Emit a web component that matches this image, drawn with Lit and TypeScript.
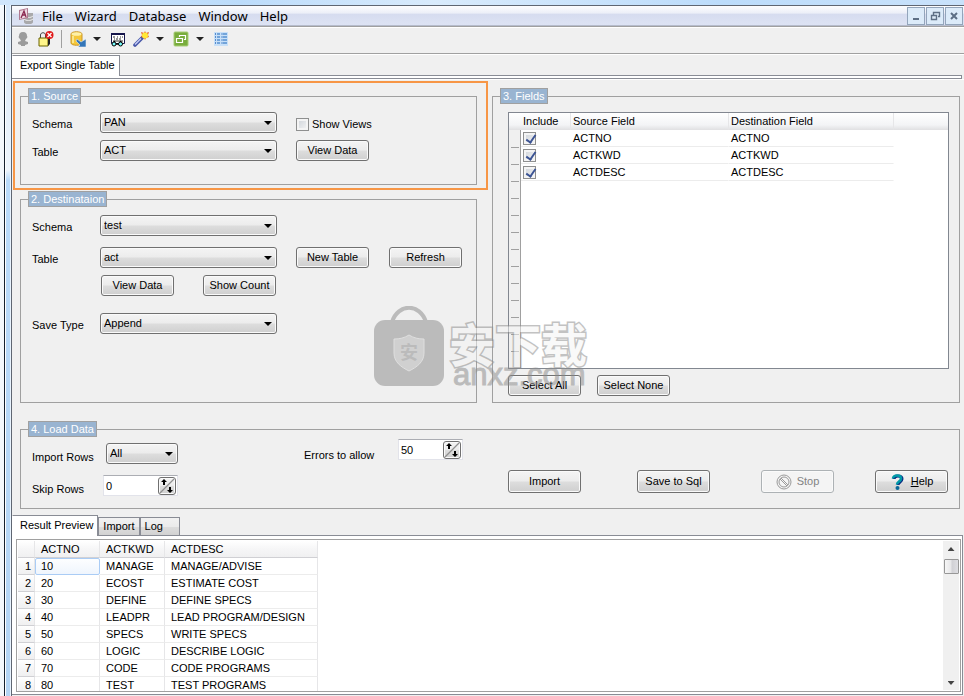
import { LitElement, html, svg, css } from "lit";
import { customElement, property } from "lit/decorators.js";

const face = css`
  :host, * { box-sizing: border-box; }
  button, select, input {
    font: inherit;
    color: inherit;
    margin: 0;
  }
  .face, button.push, select {
    border: 1px solid #707070;
    border-radius: 3px;
    background: linear-gradient(#f4f4f4, #ececec 48%, #dddddd 52%, #cfcfcf);
    box-shadow: inset 0 0 0 1px #fafafa;
  }
  button.push {
    width: 73px;
    height: 21px;
    padding: 0;
    flex: none;
    display: inline-flex;
    align-items: center;
    justify-content: center;
    gap: 5px;
    white-space: nowrap;
  }
  button.tall { height: 23px; }
  button.push:disabled {
    color: #838383;
    border-color: #adb2b5;
    background: #f4f4f4;
  }
`;

@customElement("drop-down")
class DropDown extends LitElement {
  @property() name = "";
  @property() label = "";
  @property({ type: Array }) options: string[] = [];

  static styles = [
    face,
    css`
      :host { display: block; position: relative; height: 21px; }
      select {
        appearance: none;
        display: block;
        width: 100%;
        height: 21px;
        padding: 0 20px 0 3px;
        line-height: 17px;
      }
      :host::after {
        content: "";
        position: absolute;
        right: 5px;
        top: 9px;
        border: 4px solid transparent;
        border-top-color: #000;
        border-bottom-width: 0;
        pointer-events: none;
      }
    `,
  ];

  render() {
    return html`<select name=${this.name} aria-label=${this.label}>
      ${this.options.map((o) => html`<option>${o}</option>`)}
    </select>`;
  }
}

@customElement("spin-box")
class SpinBox extends LitElement {
  @property() label = "";
  @property() value = "0";

  static styles = [
    face,
    css`
      :host {
        display: flex;
        align-items: center;
        height: 21px;
        background: #fff;
        border: 1px solid #e2e3ea;
        border-top-color: #abadb3;
      }
      input {
        appearance: textfield;
        flex: 1;
        min-width: 0;
        height: 18px;
        padding: 0 2px;
        border: 0;
        background: none;
        outline: none;
      }
      input::-webkit-inner-spin-button { display: none; }
      button { flex: none; width: 18px; height: 18px; padding: 0; margin-right: 1px; }
      svg { display: block; width: 16px; height: 16px; }
    `,
  ];

  render() {
    return html`<input type="number" aria-label=${this.label} .value=${this.value} />
      <button class="face" aria-label="Change ${this.label}">
        <svg viewBox="0 0 16 16">
          <path d="M1 15 15 1" stroke="#909090" stroke-width="1.2" />
          <path d="M5 1 8 4H6v3H4V4H2ZM11 15l3-3h-2V9h-2v3H8Z" fill="#000" />
        </svg>
      </button>`;
  }
}

const icon = {
  app: svg`<path d="M6 5h9v9c0 3-9 3-9 0Z" fill="#a9a9ab"/><path d="M6 8c2 2 7 2 9 0M6 11c2 2 7 2 9 0" fill="none" stroke="#efefef"/><path d="M1 2 10 0v10L1 12Z" fill="#b07890"/><path d="M2 3l7-2v8l-7 2Z" fill="#ecdae2"/><path d="m3 10 3-7 2 6M4 7h3" fill="none" stroke="#8a2850" stroke-width="1.3"/>`,
  person: svg`<path d="M8 1c3 0 4 2 4 4 1 1 0 2-1 3l-1 2 3 1v2l-3 1v1H6v-1l-3-1v-2l3-1-1-2C4 7 3 6 4 5c0-2 1-4 4-4Z" fill="#9b9b9b"/>`,
  lock: svg`<path d="M2.500 7V4c0-3 5-3 5 0v3" fill="none" stroke="#444"/><path d="M1 7h9v8H1Z" fill="#fff58a" stroke="#6a6400"/><path d="m10 7 2-2v8l-2 2Z" fill="#222"/><circle cx="11.500" cy="4" r="4" fill="#e01818"/><path d="m9.500 2 4 4M13.500 2l-4 4" stroke="#fff" stroke-width="1.300"/>`,
  data: svg`<path d="M1 3c0-3 11-3 11 0v9c0 3-11 3-11 0Z" fill="#f5c73a" stroke="#c8962a"/><ellipse cx="6.500" cy="3" rx="5" ry="1.800" fill="#fdf0a8"/><path d="M3 5v7" stroke="#fbe68a" stroke-width="2"/><path d="m7 8 4 3 5-3v8H8l2-2-4-4Z" fill="#3476b8" stroke="#dfeaf5" stroke-width=".6"/>`,
  view: svg`<path d="M1.500 2.500h13v10h-13Z" fill="#fff" stroke="#15154a"/><path d="M1 2h14v2H1Z" fill="#15154a"/><path d="M3 6h2M7 6h1M10 6h1M12 6h1M4 8h1M6 8h2M9 8h2M3 10h10" stroke="#333"/><path d="M3 12l2-2M12 12l-2-2M6 13h4" stroke="#000" stroke-width="1.300"/><circle cx="4" cy="13" r="2" fill="#7ff" stroke="#000"/><circle cx="10.500" cy="13" r="2" fill="#7ff" stroke="#000"/>`,
  wand: svg`<path d="M2 14 9 7" stroke="#4656a8" stroke-width="3.600" stroke-linecap="round"/><path d="m2 13.500 6-6" stroke="#c4ccf4" stroke-width="1.500"/><path d="m12 0 1 2 3-1-1 3 1 2-3 1-1 2-1-2-3-1 1-2-1-3 3 1Z" fill="#e86028"/><circle cx="12" cy="4.500" r="3" fill="#ffe838"/>`,
  windows: svg`<rect x="1" y="1" width="14" height="14" rx="1" fill="#79ad3d" stroke="#a9ce78"/><path d="M6.500 6V4.500h6v4H11M3.500 7.500h6v4h-6Z" fill="none" stroke="#fff" stroke-width="1.200"/>`,
  list: svg`<path d="M1 1h14v14H1Z" fill="#c8e0f8"/><path d="M4 3h3M10 3h4M4 6h3M10 6h4M4 9h3M10 9h4M4 12h3M10 12h4" stroke="#5590d0" stroke-width="1.400"/><path d="M2 3h1M8.500 3h1M2 6h1M8.500 6h1M2 9h1M8.500 9h1M2 12h1M8.500 12h1" stroke="#3070c0" stroke-width="1.400"/>`,
  help: svg`<path d="M4 5c0-4 8-4 8 0 0 3-4 3-4 6" fill="none" stroke="#0a2a80" stroke-width="3"/><path d="M3 4.500c0-4 8-4 8 0 0 3-4 3-4 6" fill="none" stroke="#009aa8" stroke-width="2.600"/><circle cx="7.500" cy="14" r="2" fill="#086898"/>`,
  stop: svg`<circle cx="8" cy="8" r="7" fill="none" stroke="#9a9a9a"/><circle cx="8" cy="8" r="5" fill="none" stroke="#9a9a9a"/><path d="m4 5 7 7M5 4l7 7" stroke="#9a9a9a"/>`,
};

const fields = ["ACTNO", "ACTKWD", "ACTDESC"];
const rows = [
  ["10", "MANAGE", "MANAGE/ADVISE"],
  ["20", "ECOST", "ESTIMATE COST"],
  ["30", "DEFINE", "DEFINE SPECS"],
  ["40", "LEADPR", "LEAD PROGRAM/DESIGN"],
  ["50", "SPECS", "WRITE SPECS"],
  ["60", "LOGIC", "DESCRIBE LOGIC"],
  ["70", "CODE", "CODE PROGRAMS"],
  ["80", "TEST", "TEST PROGRAMS"],
];

@customElement("app-root")
class AppRoot extends LitElement {
  static styles = [
    face,
    css`
      :host {
        display: flex;
        height: 100vh;
        padding: 5px 0 0 11px;
        font: 11px/17px "Liberation Sans", Arial, sans-serif;
        color: #000;
        background:
          linear-gradient(90deg, #cfe5fb, #bcdcfb 25%, #d9ebfc 45%, #bcdcfb 75%, #c9e2fb) top / 100% 5px no-repeat,
          linear-gradient(90deg, #f4f8fc 4px, #15202e 4px 5px, #fff 5px 6px, transparent 6px 10px, #e8f3fe 10px) left / 11px 100% no-repeat,
          linear-gradient(#d3e6fa, #eef5fc 170px, #b9dafa 180px, #b3d4f4);
      }
      .window {
        flex: 1;
        min-width: 0;
        display: flex;
        flex-direction: column;
        background: #f0f0f0;
        border-left: 1px solid #5f6672;
        border-top: 1px solid #5f6672;
      }
      .menubar {
        flex: none;
        display: flex;
        align-items: center;
        height: 20px;
        padding: 0 1px 0 6px;
        background: linear-gradient(#fdfdfe, #eceff8 38%, #d6dcef 42%, #dde3f4);
        border-bottom: 1px solid #b6bccc;
        font: 13px/18px "Noto Sans", "Open Sans", sans-serif;
      }
      .menubar svg { width: 16px; height: 16px; margin-right: 2px; flex: none; }
      nav { display: flex; flex: 1; }
      nav a { color: #000; text-decoration: none; padding: 0 6px; line-height: 16px; }
      .caption { display: flex; gap: 1px; }
      .caption button {
        width: 18px;
        height: 18px;
        padding: 0;
        border: 1px solid #93a5bb;
        background: #dcebf9;
      }
      .caption svg { display: block; width: 16px; height: 16px; margin: 0; }
      .toolbar {
        flex: none;
        display: flex;
        align-items: center;
        height: 28px;
        padding: 0 0 2px 3px;
        border-top: 1px solid #a0a0a0;
        border-bottom: 1px solid #a0a0a0;
        box-shadow: inset 0 1px #fff, 0 1px #fff;
      }
      .toolbar button { border: 0; background: none; padding: 0; height: 18px; }
      .tool { width: 16px; margin-right: 7px; }
      .tool svg { display: block; width: 16px; height: 16px; margin: 1px 0; }
      .toolbar .drop {
        width: 8px;
        height: 4px;
        margin-right: 9px;
        background: #222;
        clip-path: polygon(0 0, 100% 0, 50% 100%);
      }
      .sep { width: 1px; height: 18px; background: #a0a0a0; margin-right: 8px; }
      .tabs { flex: none; display: flex; align-items: flex-end; position: relative; }
      .tabs button {
        min-width: 40px;
        height: 18px;
        padding: 0 4px;
        text-align: left;
        border: 1px solid #898c95;
        border-width: 1px 1px 0 1px;
        background: linear-gradient(#f2f2f2, #ebebeb 50%, #dddddd 52%, #d2d2d2);
      }
      .tabs button[aria-selected="true"] {
        height: 21px;
        padding: 0 4px 2px 7px;
        border-left-color: #fff;
        background: #fff;
        margin: 0 0 -1px;
      }
      .main-tabs { padding-top: 1px; }
      .rail {
        flex: none;
        height: 4px;
        margin-right: 2px;
        background: #fff;
        border: 1px solid #898c95;
        border-left: 0;
      }
      .work { flex: none; padding: 9px 4px 0 8px; box-shadow: inset 0 1px #fff; }
      .columns {
        position: relative;
        display: grid;
        grid-template-columns: minmax(0, 457fr) minmax(0, 468fr);
        gap: 15px;
      }
      .left { display: flex; flex-direction: column; gap: 6px; }
      fieldset {
        min-width: 0;
        margin: 0;
        padding: 8px 11px 0;
        border: 1px solid #a0a0a0;
      }
      legend {
        height: 16px;
        margin-left: -4px;
        padding: 0 2px;
        line-height: 14px;
        color: #fff;
        background: #99b4d1;
        border: 1px solid #a0a0a0;
      }
      .source { padding-bottom: 23px; }
      .highlight { display: grid; position: relative; }
      .highlight::after {
        content: "";
        position: absolute;
        inset: -7px -11px -5px -7px;
        border: 2px solid #f79646;
        pointer-events: none;
      }
      .row { display: flex; height: 21px; margin-bottom: 7px; }
      .row:last-child { margin-bottom: 0; }
      .row.wide { margin-bottom: 11px; }
      .row.broad { margin-bottom: 17px; }
      .name { width: 68px; flex: none; align-self: flex-end; }
      drop-down { width: 177px; flex: none; margin-right: 19px; }
      .row .push + .push { margin-left: 20px; }
      .row.inset { padding-left: 69px; }
      .row.inset .push + .push { margin-left: 29px; }
      .check { display: flex; align-items: center; gap: 3px; align-self: flex-end; }
      input[type="checkbox"] {
        appearance: none;
        flex: none;
        width: 13px;
        height: 13px;
        border: 1px solid #8e8f8f;
        background: linear-gradient(135deg, #cdd2d8, #f6f6f6);
        box-shadow: inset 0 0 0 2px #f4f4f4;
      }
      input[type="checkbox"]:checked::after {
        content: "";
        display: block;
        width: 4px;
        height: 8px;
        margin: 0 0 0 4px;
        border: solid #3c5494;
        border-width: 0 2px 2px 0;
        transform: rotate(35deg);
      }
      .dest { padding-bottom: 68px; }
      .fields { padding: 8px 10px 6px 15px; }
      .fields legend { margin-left: -8px; }
      .grid {
        height: 257px;
        border: 1px solid #828790;
        background:
          linear-gradient(#a0a0a0, #a0a0a0) 11px 17px / 1px 100% no-repeat,
          repeating-linear-gradient(#f0f0f0 0 16px, #a0a0a0 16px 17px) 2px 18px / 8px 100% no-repeat,
          linear-gradient(#f0f0f0, #f0f0f0) 0 17px / 11px 100% no-repeat,
          linear-gradient(#fff, #f3f4f6 70%, #e0e0e2) 0 0 / 100% 17px no-repeat,
          #fff;
      }
      table { border-collapse: separate; border-spacing: 0; table-layout: fixed; }
      th, td {
        height: 17px;
        padding: 0;
        line-height: 16px;
        font-weight: normal;
        text-align: left;
        white-space: nowrap;
        border-right: 1px solid #e6e6e8;
        border-bottom: 1px solid #ececec;
        overflow: hidden;
      }
      .grid table { width: 385px; }
      .grid th, .grid td { padding-left: 2px; }
      .grid th { border-bottom-color: transparent; }
      .grid td { border-right-color: transparent; }
      .grid .gutter { width: 12px; border-color: transparent; }
      .grid td.gutter { border: 0; }
      .grid .include { width: 50px; }
      .grid input { display: block; }
      .grid .from { width: 158px; }
      .actions { display: flex; gap: 16px; margin-top: 6px; }
      .watermark {
        position: absolute;
        left: 354px;
        top: 218px;
        display: flex;
        color: #8c8c8c;
        opacity: 0.52;
        pointer-events: none;
      }
      .watermark svg { width: 70px; height: 80px; margin-right: 5px; }
      .brand { display: flex; flex-direction: column; }
      .brand b {
        height: 50px;
        font: bold 46px/56px "Noto Sans CJK SC", sans-serif;
        color: #f4f4f4;
        -webkit-text-stroke: 3px #8c8c8c;
        paint-order: stroke fill;
        margin-top: 8px;
      }
      .brand span { font-size: 31px; line-height: 22px; padding-left: 4px; -webkit-text-stroke: 1px #8c8c8c; }
      .load { display: flex; height: 88px; margin-top: 18px; padding: 0 11px; }
      .load-body { display: flex; width: 100%; height: 71px; }
      .limits { padding-top: 6px; width: 272px; flex: none; }
      .limits .row { margin-bottom: 11px; }
      .limits .name { width: 74px; margin-bottom: -2px; }
      .limits drop-down { width: 72px; }
      .limits spin-box { width: 75px; margin-left: -3px; }
      .errors { display: flex; width: 159px; flex: none; padding-top: 2px; }
      .errors .name { width: 94px; align-self: auto; margin-top: 8px; }
      .errors spin-box { width: 65px; }
      .run {
        flex: 1;
        display: grid;
        grid-template-columns: 129fr 124fr 114fr 73px;
        margin-left: 45px;
        padding-top: 33px;
      }
      .push svg { width: 16px; height: 16px; }
      .preview {
        flex: 1;
        min-height: 0;
        display: flex;
        margin: 0 1px 1px 0;
        padding: 3px 1px 2px 4px;
        background: #fff;
        border: 1px solid #898c95;
        border-left: 0;
      }
      .result-tabs { padding-top: 6px; }
      .sheet {
        flex: 1;
        min-width: 0;
        display: flex;
        justify-content: space-between;
        border: 1px solid #a0a0a0;
        padding: 1px;
        overflow: hidden;
      }
      .sheet table { width: 300px; height: 153px; }
      .sheet th, .sheet td { padding-left: 6px; }
      .sheet thead th, .sheet .num {
        background: linear-gradient(#fff, #f6f6f7 50%, #f0f0f1);
        border-bottom: 1px solid #d0d0d4;
      }
      .sheet .num { width: 17px; padding: 0 3px 0 0; text-align: right; }
      .sheet .a { width: 65px; }
      .sheet tbody tr:first-child .a {
        border: 1px solid #aaccf5;
        border-radius: 2px;
        padding-left: 5px;
        line-height: 15px;
        background: linear-gradient(#fdfeff, #eff5fd);
      }
      .scroll {
        flex: none;
        width: 16px;
        display: flex;
        flex-direction: column;
        align-items: center;
        padding: 6px 0 5px;
        background: #f0f0f0;
      }
      .up, .down { width: 7px; height: 4px; background: #444; clip-path: polygon(50% 0, 100% 100%, 0 100%); }
      .down { clip-path: polygon(0 0, 100% 0, 50% 100%); margin-top: auto; }
      .thumb {
        width: 15px;
        height: 15px;
        margin-top: 8px;
        border: 1px solid #979797;
        border-radius: 1px;
        background: linear-gradient(90deg, #f6f6f6, #e6e6e8 48%, #d0d0d4 52%, #dedee2);
      }
    `,
  ];

  private ico(name: keyof typeof icon) {
    return html`<svg viewBox="0 0 16 16">${icon[name]}</svg>`;
  }

  private tool(name: keyof typeof icon, label: string, split = false) {
    return html`<button class="tool" aria-label=${label}>${this.ico(name)}</button>
      ${split ? html`<button class="drop" aria-label="${label} options"></button>` : ""}`;
  }

  render() {
    return html`
      <div class="window">
        <header class="menubar">
          ${this.ico("app")}
          <nav>
            ${["File", "Wizard", "Database", "Window", "Help"].map((m) => html`<a href="#">${m}</a>`)}
          </nav>
          <div class="caption">
            <button aria-label="Minimize"><svg viewBox="0 0 16 16"><path d="M5 11h6" stroke="#5d6f85" stroke-width="2"/></svg></button>
            <button aria-label="Restore"><svg viewBox="0 0 16 16"><path d="M6.500 7V4.500h6v4H11M4.500 7.500h5v4h-5Z" fill="none" stroke="#5d6f85" stroke-width="1.400"/></svg></button>
            <button aria-label="Close"><svg viewBox="0 0 16 16"><path d="m5 5 6 6M11 5l-6 6" stroke="#5d6f85" stroke-width="2"/></svg></button>
          </div>
        </header>
        <div class="toolbar">
          ${this.tool("person", "User")} ${this.tool("lock", "Disconnect")}
          <span class="sep"></span>
          ${this.tool("data", "Export", true)} ${this.tool("view", "View table")}
          ${this.tool("wand", "Wizards", true)} ${this.tool("windows", "Windows", true)}
          ${this.tool("list", "List")}
        </div>
        <div class="tabs main-tabs" role="tablist">
          <button role="tab" aria-selected="true">Export Single Table</button>
        </div>
        <div class="rail"></div>

        <main class="work">
          <div class="columns">
            <div class="left">
              <div class="highlight">
                <fieldset class="source">
                  <legend>1. Source</legend>
                  <div class="row">
                    <span class="name">Schema</span>
                    <drop-down label="Source schema" .options=${["PAN"]}></drop-down>
                    <label class="check"><input type="checkbox" />Show Views</label>
                  </div>
                  <div class="row">
                    <span class="name">Table</span>
                    <drop-down label="Source table" .options=${["ACT"]}></drop-down>
                    <button class="push">View Data</button>
                  </div>
                </fieldset>
              </div>
              <fieldset class="dest">
                <legend>2. Destinataion</legend>
                <div class="row wide">
                  <span class="name">Schema</span>
                  <drop-down label="Destination schema" .options=${["test"]}></drop-down>
                </div>
                <div class="row">
                  <span class="name">Table</span>
                  <drop-down label="Destination table" .options=${["act"]}></drop-down>
                  <button class="push">New Table</button>
                  <button class="push">Refresh</button>
                </div>
                <div class="row broad inset">
                  <button class="push">View Data</button>
                  <button class="push">Show Count</button>
                </div>
                <div class="row">
                  <span class="name">Save Type</span>
                  <drop-down label="Save type" .options=${["Append"]}></drop-down>
                </div>
              </fieldset>
            </div>
            <fieldset class="fields">
              <legend>3. Fields</legend>
              <div class="grid">
                <table>
                  <thead>
                    <tr>
                      <th class="gutter"></th>
                      <th class="include">Include</th>
                      <th class="from">Source Field</th>
                      <th>Destination Field</th>
                    </tr>
                  </thead>
                  <tbody>
                    ${fields.map(
                      (f) => html`<tr>
                        <td class="gutter"></td>
                        <td><input type="checkbox" checked aria-label="Include ${f}" /></td>
                        <td>${f}</td>
                        <td>${f}</td>
                      </tr>`
                    )}
                  </tbody>
                </table>
              </div>
              <div class="actions">
                <button class="push">Select All</button>
                <button class="push">Select None</button>
              </div>
            </fieldset>
            <div class="watermark">
              <svg viewBox="0 0 70 80">
                <path d="M18 16C24-3 46-3 52 16" fill="none" stroke="currentColor" stroke-width="4" />
                <rect y="14" width="70" height="66" rx="11" fill="currentColor" />
                <path d="M20 33c6 0 10-1 15-4 5 3 9 4 15 4v14c0 9-7 14-15 18-8-4-15-9-15-18Z" fill="#b4b4b4" stroke="#d0d0d0" />
                <text x="35" y="53" text-anchor="middle" font-family="Noto Sans CJK SC, sans-serif" font-weight="bold" font-size="18" fill="currentColor">安</text>
              </svg>
              <div class="brand"><b>安下载</b><span>anxz.com</span></div>
            </div>
          </div>
          <fieldset class="load">
            <legend>4. Load Data</legend>
            <div class="load-body">
              <div class="limits">
                <div class="row">
                  <span class="name">Import Rows</span>
                  <drop-down label="Import rows" .options=${["All"]}></drop-down>
                </div>
                <div class="row">
                  <span class="name">Skip Rows</span>
                  <spin-box label="Skip rows" value="0"></spin-box>
                </div>
              </div>
              <div class="errors">
                <span class="name">Errors to allow</span>
                <spin-box label="Errors to allow" value="50"></spin-box>
              </div>
              <div class="run">
                <button class="push tall">Import</button>
                <button class="push tall">Save to Sql</button>
                <button class="push tall" disabled>${this.ico("stop")}Stop</button>
                <button class="push tall">${this.ico("help")}<span><u>H</u>elp</span></button>
              </div>
            </div>
          </fieldset>
        </main>

        <div class="tabs result-tabs" role="tablist">
          <button role="tab" aria-selected="true">Result Preview</button>
          <button role="tab" aria-selected="false">Import</button>
          <button role="tab" aria-selected="false">Log</button>
        </div>
        <section class="preview">
          <div class="sheet">
            <table>
              <thead>
                <tr>
                  <th class="num"></th>
                  <th class="a">ACTNO</th>
                  <th class="a">ACTKWD</th>
                  <th>ACTDESC</th>
                </tr>
              </thead>
              <tbody>
                ${rows.map(
                  (r, i) => html`<tr>
                    <th class="num">${i + 1}</th>
                    <td class="a">${r[0]}</td>
                    <td>${r[1]}</td>
                    <td>${r[2]}</td>
                  </tr>`
                )}
              </tbody>
            </table>
            <div class="scroll">
              <span class="up"></span>
              <span class="thumb"></span>
              <span class="down"></span>
            </div>
          </div>
        </section>
      </div>
    `;
  }
}
